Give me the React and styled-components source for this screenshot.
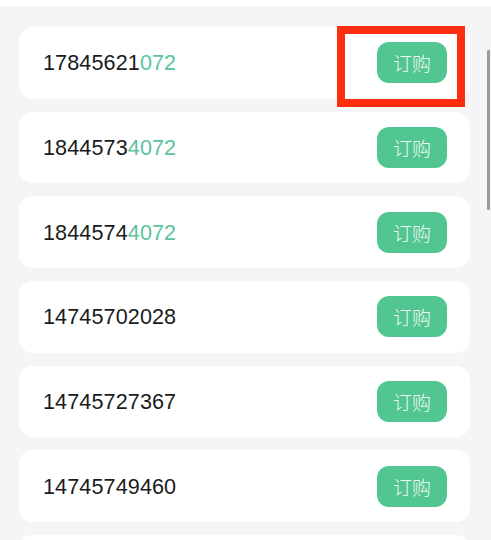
import React from "react";
import styled, { createGlobalStyle } from "styled-components";

const Global = createGlobalStyle`
  html, body { margin: 0; padding: 0; background: #f5f5f5; }
  body { font-family: "Liberation Sans", "Noto Sans CJK SC", sans-serif; overflow: hidden; }
`;

const Page = styled.div`
  width: 491px;
  height: 540px;
  background: #f5f5f5;
  position: relative;
  overflow: hidden;
`;

const TopStrip = styled.div`
  height: 6px;
  background: #ffffff;
`;

const List = styled.div`
  display: flex;
  flex-direction: column;
  gap: 13px;
  padding: 21px 21px 0 19px;
`;

const Card = styled.div`
  position: relative;
  height: 71.7px;
  flex: 0 0 auto;
  background: #ffffff;
  border-radius: 14px;
  display: flex;
  align-items: center;
  justify-content: space-between;
  padding: 0 23px 0 24px;
  box-sizing: border-box;
`;

const Number = styled.span`
  font-family: "Liberation Sans", Arial, sans-serif;
  font-size: 21.6px;
  color: #1b1b1b;
  letter-spacing: 0.1px;
  padding-top: 1px;
`;

const Tail = styled.span`
  color: #5cc49c;
`;

const Button = styled.button`
  width: 70px;
  height: 41px;
  border: none;
  border-radius: 12px;
  background: #52c690;
  color: #eef9f3;
  font-family: "Noto Sans CJK SC", sans-serif;
  font-size: 19px;
  font-weight: 300;
  padding: 0;
  display: flex;
  align-items: center;
  justify-content: center;
`;

const Highlight = styled.div`
  position: absolute;
  left: 318px;
  top: -1px;
  width: 128px;
  height: 81px;
  box-sizing: border-box;
  border: 8px solid #fd2d0d;
  pointer-events: none;
`;

const ScrollThumb = styled.div`
  position: absolute;
  right: 1px;
  top: 50px;
  width: 3px;
  height: 160px;
  background: #9b9b9b;
  border-radius: 1px;
`;

const rows = [
  { head: "17845621", tail: "072", highlight: true },
  { head: "1844573", tail: "4072" },
  { head: "1844574", tail: "4072" },
  { head: "14745702028", tail: "" },
  { head: "14745727367", tail: "" },
  { head: "14745749460", tail: "" },
];

export default function App() {
  return (
    <>
      <Global />
      <Page>
        <TopStrip />
        <List>
          {rows.map((r, i) => (
            <Card key={i}>
              <Number>
                {r.head}
                {r.tail && <Tail>{r.tail}</Tail>}
              </Number>
              <Button>订购</Button>
              {r.highlight && <Highlight />}
            </Card>
          ))}
          <Card />
        </List>
        <ScrollThumb />
      </Page>
    </>
  );
}
